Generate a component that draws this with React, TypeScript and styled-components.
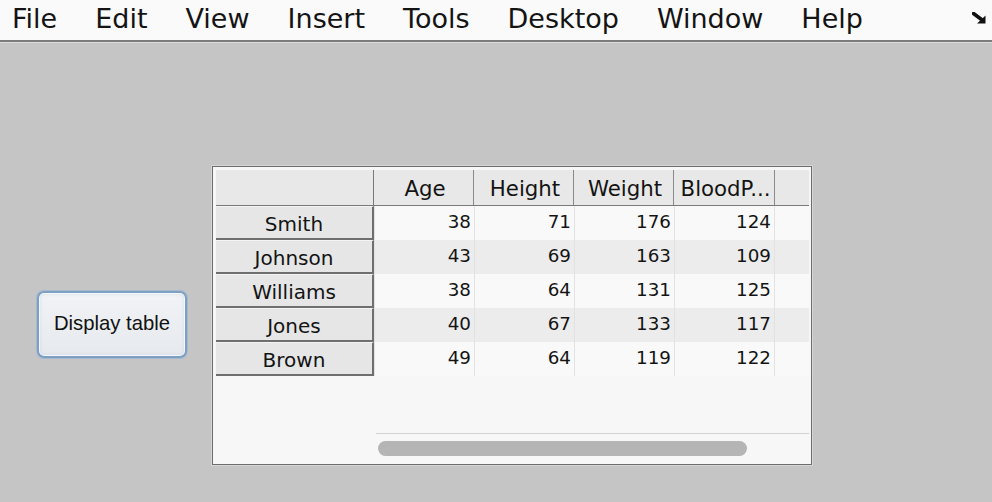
import React from "react";
import styled, { createGlobalStyle } from "styled-components";

const Global = createGlobalStyle`
  html, body { margin: 0; padding: 0; }
  body { background: #c6c5c6; width: 992px; height: 502px; overflow: hidden; }
`;

const Page = styled.div`
  width: 992px;
  height: 502px;
  display: flex;
  flex-direction: column;
  background: #c6c5c6;
`;

const MenuBar = styled.div`
  height: 40px;
  flex: none;
  display: flex;
  align-items: center;
  padding-left: 12px;
  padding-right: 5px;
  background: #fafafa;
  border-bottom: 2px solid #7c7c7c;
  box-shadow: 0 1px 0 #dcdcdc;
  font-family: "DejaVu Sans", sans-serif;
  font-size: 27px;
  color: #141414;
`;

const MenuItem = styled.span`
  margin-right: 38px;
  line-height: 40px;
  padding-bottom: 2px;
`;

const Spring = styled.div`
  flex: 1;
`;

const Corner = styled.svg`
  margin-bottom: 4px;
`;

const Content = styled.div`
  flex: 1;
  display: flex;
  align-items: flex-start;
  padding-left: 37px;
`;

const Button = styled.button`
  margin-top: 249px;
  width: 150px;
  height: 67px;
  border-radius: 7px;
  border: 2px solid #7f9fc3;
  box-shadow: 0 0 0 1px #a3b9d1, inset 0 0 0 1px #f4f7fb, inset 0 0 4px #c6d6e8;
  background: linear-gradient(#f1f3f6, #e6e9ed);
  font-family: "Liberation Sans", Arial, sans-serif;
  font-size: 20.3px;
  color: #111;
  padding: 0 0 2px 0;
`;

const Frame = styled.div`
  margin-top: 124px;
  margin-left: 25px;
  border: 1px solid #6e6e6e;
  box-shadow: 0 0 0 1px #d6d6d6;
  padding: 3px 2px 0 3px;
  background: #f7f7f7;
  display: flex;
  flex-direction: column;
  font-family: "DejaVu Sans", sans-serif;
  color: #141414;
  box-sizing: border-box;
  width: 600px;
  height: 299px;
`;

const HeaderRow = styled.div`
  display: flex;
  height: 36px;
  flex: none;
  background: #e8e8e8;
  border-bottom: 1px solid #7a7a7a;
  box-sizing: border-box;
`;

const HeadCorner = styled.div`
  width: 158px;
  border-right: 1px solid #7a7a7a;
  box-sizing: border-box;
`;

const ColHead = styled.div<{ $w: number }>`
  width: ${(p) => p.$w}px;
  flex: none;
  border-right: 1px solid #8a8a8a;
  box-sizing: border-box;
  display: flex;
  align-items: center;
  justify-content: center;
  font-size: 21.3px;
  padding-top: 2px;
  padding-left: 3px;
  white-space: nowrap;
  overflow: hidden;
`;

const Filler = styled.div`
  flex: 1;
`;

const Row = styled.div<{ $alt: boolean }>`
  display: flex;
  height: 34px;
  flex: none;
  background: ${(p) => (p.$alt ? "#ececec" : "#f9f9f9")};
`;

const RowHead = styled.div`
  width: 158px;
  flex: none;
  box-sizing: border-box;
  background: #e6e6e6;
  border-top: 1px solid #f4f4f4;
  border-right: 2px solid #6f6f6f;
  border-bottom: 2px solid #6f6f6f;
  display: flex;
  align-items: flex-end;
  justify-content: center;
  font-size: 20px;
  line-height: 24px;
  padding-bottom: 2px;
`;

const Cell = styled.div`
  width: 100px;
  flex: none;
  box-sizing: border-box;
  border-left: 1px solid #e2e2e2;
  display: flex;
  align-items: center;
  justify-content: flex-end;
  padding-right: 3px;
  padding-bottom: 3px;
  font-size: 18.3px;
`;

const Blank = styled.div`
  flex: 1;
  border-left: 1px solid #e2e2e2;
`;

const Space = styled.div`
  flex: 1;
`;

const ScrollArea = styled.div`
  height: 31px;
  flex: none;
  margin-left: 160px;
  border-top: 1px solid #d2d2d2;
  box-sizing: border-box;
  padding: 7px 0 0 2px;
`;

const Thumb = styled.div`
  width: 369px;
  height: 15px;
  border-radius: 8px;
  background: #b5b5b5;
`;

const data: [string, number, number, number, number][] = [
  ["Smith", 38, 71, 176, 124],
  ["Johnson", 43, 69, 163, 109],
  ["Williams", 38, 64, 131, 125],
  ["Jones", 40, 67, 133, 117],
  ["Brown", 49, 64, 119, 122],
];

const menus = ["File", "Edit", "View", "Insert", "Tools", "Desktop", "Window", "Help"];

export default function App() {
  return (
    <>
      <Global />
      <Page>
        <MenuBar>
          {menus.map((m) => (
            <MenuItem key={m}>{m}</MenuItem>
          ))}
          <Spring />
          <Corner width="15" height="12" viewBox="0 0 15 12">
            <path d="M1.5 1.5 L9.5 7.5" stroke="#111" strokeWidth="3.6" strokeLinecap="round" />
            <path d="M13.5 3.5 L13.5 11.5 L5 11.5 Z" fill="#111" />
          </Corner>
        </MenuBar>
        <Content>
          <Button>Display table</Button>
          <Frame>
            <HeaderRow>
              <HeadCorner />
              <ColHead $w={100}>Age</ColHead>
              <ColHead $w={100}>Height</ColHead>
              <ColHead $w={100}>Weight</ColHead>
              <ColHead $w={101}>BloodP...</ColHead>
              <Filler />
            </HeaderRow>
            {data.map((r, i) => (
              <Row key={r[0]} $alt={i % 2 === 1}>
                <RowHead>{r[0]}</RowHead>
                <Cell>{r[1]}</Cell>
                <Cell>{r[2]}</Cell>
                <Cell>{r[3]}</Cell>
                <Cell>{r[4]}</Cell>
                <Blank />
              </Row>
            ))}
            <Space />
            <ScrollArea>
              <Thumb />
            </ScrollArea>
          </Frame>
        </Content>
      </Page>
    </>
  );
}
